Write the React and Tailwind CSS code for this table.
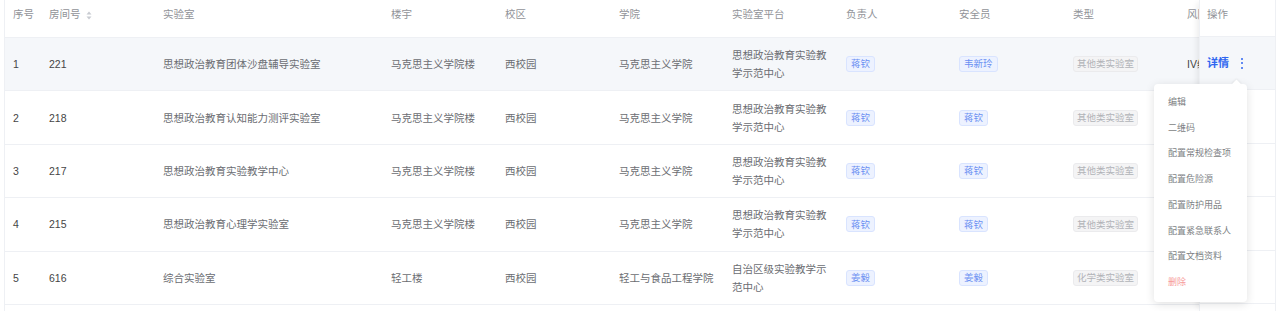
import React from "react";

const rows = [
  { no: 1, room: "221", lab: "思想政治教育团体沙盘辅导实验室", bld: "马克思主义学院楼", campus: "西校园", college: "马克思主义学院", platform: "思想政治教育实验教学示范中心", owner: "蒋钦", safety: "韦新玲", type: "其他类实验室", risk: "IV级" },
  { no: 2, room: "218", lab: "思想政治教育认知能力测评实验室", bld: "马克思主义学院楼", campus: "西校园", college: "马克思主义学院", platform: "思想政治教育实验教学示范中心", owner: "蒋钦", safety: "蒋钦", type: "其他类实验室", risk: "IV级" },
  { no: 3, room: "217", lab: "思想政治教育实验教学中心", bld: "马克思主义学院楼", campus: "西校园", college: "马克思主义学院", platform: "思想政治教育实验教学示范中心", owner: "蒋钦", safety: "蒋钦", type: "其他类实验室", risk: "IV级" },
  { no: 4, room: "215", lab: "思想政治教育心理学实验室", bld: "马克思主义学院楼", campus: "西校园", college: "马克思主义学院", platform: "思想政治教育实验教学示范中心", owner: "蒋钦", safety: "蒋钦", type: "其他类实验室", risk: "IV级" },
  { no: 5, room: "616", lab: "综合实验室", bld: "轻工楼", campus: "西校园", college: "轻工与食品工程学院", platform: "自治区级实验教学示范中心", owner: "姜毅", safety: "姜毅", type: "化学类实验室", risk: "IV级" },
];

const menu = ["编辑", "二维码", "配置常规检查项", "配置危险源", "配置防护用品", "配置紧急联系人", "配置文档资料"];

function BlueTag({ children }) {
  return (
    <span className="inline-flex h-[16px] items-center whitespace-nowrap rounded-[3px] border border-[#d9e4ff] bg-[#edf2ff] px-[4px] text-[9.5px] leading-none text-[#6a8ff2]">
      {children}
    </span>
  );
}

function GrayTag({ children }) {
  return (
    <span className="inline-flex h-[16px] items-center whitespace-nowrap rounded-[3px] border border-[#ebebed] bg-[#f4f4f5] px-[3px] text-[9.5px] leading-none text-[#b1b3b8]">
      {children}
    </span>
  );
}

function SortIcon() {
  return (
    <svg width="6" height="9" viewBox="0 0 6 9" className="ml-[5px]">
      <path d="M3 0.5 L5.5 3.5 L0.5 3.5 Z" fill="#c8cbd1" />
      <path d="M3 8.5 L5.5 5.5 L0.5 5.5 Z" fill="#c8cbd1" />
    </svg>
  );
}

export default function App() {
  const head = "flex h-[37px] shrink-0 items-center whitespace-nowrap px-[8px] pb-[7px] text-[10.5px] text-[#919398]";
  const cell = "flex shrink-0 items-center px-[8px] text-[10.5px] leading-[18px] text-[#6b6d72]";
  const num = "text-[#454545]";
  return (
    <div
      className="relative h-[311px] w-[1280px] overflow-hidden bg-white"
      style={{ fontFamily: '"Liberation Sans", "Noto Sans CJK SC", sans-serif' }}
    >
      <div className="ml-[4px] flex h-[311px] w-[1272px] border-l border-r border-[#eef0f4]">
        {/* scrollable part */}
        <div className="w-[1194px] shrink-0 overflow-hidden">
          <div className="flex w-[1300px] border-b border-[#eef0f4]">
            <div className={`${head} w-[36px]`}>序号</div>
            <div className={`${head} w-[114px]`}>房间号<SortIcon /></div>
            <div className={`${head} w-[228px]`}>实验室</div>
            <div className={`${head} w-[114px]`}>楼宇</div>
            <div className={`${head} w-[114px]`}>校区</div>
            <div className={`${head} w-[113px]`}>学院</div>
            <div className={`${head} w-[114px]`}>实验室平台</div>
            <div className={`${head} w-[113px]`}>负责人</div>
            <div className={`${head} w-[114px]`}>安全员</div>
            <div className={`${head} w-[114px]`}>类型</div>
            <div className={`${head} w-[114px]`}>风险等级</div>
          </div>
          {rows.map((r, i) => (
            <div
              key={r.no}
              className={`flex h-[53.4px] w-[1300px] border-b border-[#eef0f4] ${i === 0 ? "bg-[#f5f7fa]" : "bg-white"}`}
            >
              <div className={`${cell} w-[36px] ${num}`}>{r.no}</div>
              <div className={`${cell} w-[114px] ${num}`}>{r.room}</div>
              <div className={`${cell} w-[228px]`}>{r.lab}</div>
              <div className={`${cell} w-[114px]`}>{r.bld}</div>
              <div className={`${cell} w-[114px]`}>{r.campus}</div>
              <div className={`${cell} w-[113px]`}>{r.college}</div>
              <div className={`${cell} w-[114px]`}>{r.platform}</div>
              <div className={`${cell} w-[113px]`}><BlueTag>{r.owner}</BlueTag></div>
              <div className={`${cell} w-[114px]`}><BlueTag>{r.safety}</BlueTag></div>
              <div className={`${cell} w-[114px]`}><GrayTag>{r.type}</GrayTag></div>
              <div className={`${cell} w-[114px] whitespace-nowrap ${num}`}>{r.risk}</div>
            </div>
          ))}
        </div>
        {/* fixed operation column */}
        <div className="relative z-10 w-[76px] shrink-0 border-l border-[#eef0f4] bg-white shadow-[-5px_0_6px_-3px_rgba(0,0,0,0.08)]">
          <div className="flex h-[37px] items-center whitespace-nowrap border-b border-[#eef0f4] pb-[7px] pl-[7px] text-[10.5px] text-[#919398]">操作</div>
          {rows.map((r, i) => (
            <div
              key={r.no}
              className={`flex h-[53.4px] items-center border-b border-[#eef0f4] pl-[7px] ${i === 0 ? "bg-[#f5f7fa]" : "bg-white"}`}
            >
              {i === 0 && (
                <>
                  <span className="whitespace-nowrap text-[11px] font-semibold text-[#2f66f0]">详情</span>
                  <span className="ml-[12px] flex flex-col items-center gap-[2.5px]">
                    <span className="h-[2px] w-[2px] rounded-full bg-[#2f66f0]" />
                    <span className="h-[2px] w-[2px] rounded-full bg-[#2f66f0]" />
                    <span className="h-[2px] w-[2px] rounded-full bg-[#2f66f0]" />
                  </span>
                </>
              )}
            </div>
          ))}
        </div>
      </div>

      {/* dropdown menu */}
      <div className="absolute left-[1154px] top-[84px] z-20 w-[93px] rounded-[4px] bg-white py-[6px] shadow-[0_2px_10px_rgba(0,0,0,0.12)]">
        <div className="absolute left-[79px] top-[-3px] h-[7px] w-[7px] rotate-45 bg-white shadow-[-1px_-1px_2px_rgba(0,0,0,0.05)]" />
        {menu.map((m) => (
          <div key={m} className="flex h-[25.7px] items-center whitespace-nowrap pl-[14px] text-[9px] text-[#7d7f84]">
            {m}
          </div>
        ))}
        <div className="flex h-[25.7px] items-center pl-[14px] text-[9px] text-[#f79a9a]">删除</div>
      </div>
    </div>
  );
}
